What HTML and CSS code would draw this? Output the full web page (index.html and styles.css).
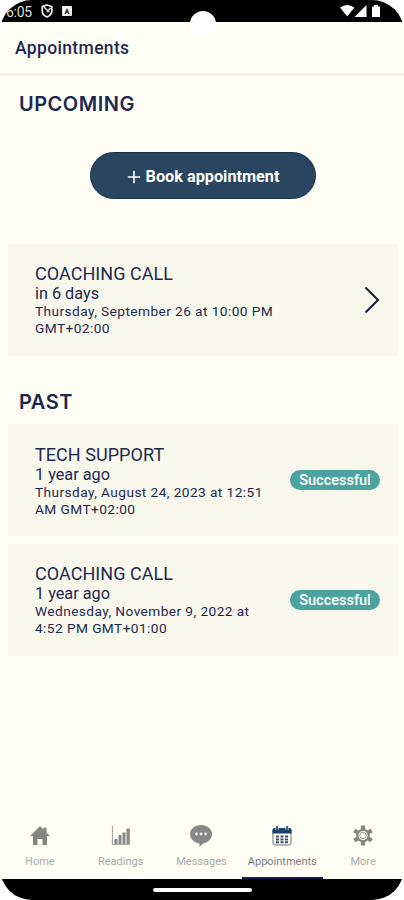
FILE: index.html
```html
<!DOCTYPE html>
<html lang="en">
<head>
<meta charset="utf-8">
<title>Appointments</title>
<link rel="stylesheet" href="styles.css">
</head>
<body>
<div class="phone">
  <div class="status">
    <span class="time">6:05</span>
    <svg class="shield" width="12" height="14" viewBox="0 0 12 14"><path d="M6 1 10.8 2.7V6.500C10.800 9.500 8.500 12 6 13 3.500 12 1.200 9.500 1.200 6.500V2.700Z" fill="none" stroke="#eee" stroke-width="1.700"/><path d="M3 3 8 8M6 8 9.500 4" stroke="#ddd" stroke-width="1.500"/></svg>
    <svg class="abox" width="10" height="10" viewBox="0 0 10 10"><rect width="10" height="10" rx="1" fill="#eee"/><path d="M5 2 7.500 8H6L5 6 4 8H2.500Z" fill="#222"/></svg>
    <svg class="signals" width="42" height="14" viewBox="0 0 42 14"><path d="M0 3.500Q7.200-1.500 14.400 3.500L7.200 12.500ZM14.500 13 26.500 1V13ZM32 2.500H34V1H38V2.500H40V13H32Z" fill="#fff"/></svg>
  </div>
  <div class="camera"></div>
  <header class="bar">Appointments</header>
  <main class="content">
    <h2>UPCOMING</h2>
    <button class="book"><svg width="14" height="14" viewBox="0 0 14 14"><path d="M7 .8V13.200M.8 7H13.200" stroke="#fff" stroke-width="1.600"/></svg><span>Book appointment</span></button>
    <article class="card">
      <div class="info"><h3>COACHING CALL</h3><p class="when">in 6 days</p><p class="date">Thursday, September 26 at 10:00 PM<br>GMT+02:00</p></div>
      <svg class="chevron" width="16" height="28" viewBox="0 0 16 28"><path d="M1.500 1.500 14 14 1.500 26.500" fill="none" stroke="#1c1c46" stroke-width="2"/></svg>
    </article>
    <h2 class="past">PAST</h2>
    <article class="card">
      <div class="info"><h3>TECH SUPPORT</h3><p class="when">1 year ago</p><p class="date">Thursday, August 24, 2023 at 12:51<br>AM GMT+02:00</p></div>
      <span class="badge">Successful</span>
    </article>
    <article class="card">
      <div class="info"><h3>COACHING CALL</h3><p class="when">1 year ago</p><p class="date">Wednesday, November 9, 2022 at<br>4:52 PM GMT+01:00</p></div>
      <span class="badge">Successful</span>
    </article>
  </main>
  <nav class="tabs">
    <a class="tab"><svg width="22" height="22" viewBox="0 0 22 22"><path d="M11 1 14.500 4.400V2.500H17.500V7.400L21 11H18V20H13.500V14H8.500V20H4V11H1Z" fill="#858585"/></svg><span>Home</span></a>
    <a class="tab"><svg width="22" height="22" viewBox="0 0 22 22"><path d="M2.500 1V19.500H20" fill="none" stroke="#aaa" stroke-width="1.200"/><path d="M4.500 14H7.500V19H4.500ZM8.500 10H11.500V19H8.500ZM12.500 7.500H15.500V19H12.500ZM16.500 3.500H19.800V19H16.500Z" fill="#888"/></svg><span>Readings</span></a>
    <a class="tab"><svg width="24" height="22" viewBox="0 0 24 22"><path d="M12 0C18 0 23 4 23 9 23 14 18.500 18 14 18.500L10.500 22V18.500C5.500 18 1 14 1 9 1 4 6 0 12 0Z" fill="#888"/><g fill="#eee"><circle cx="7.500" cy="9" r="1.400"/><circle cx="12" cy="9" r="1.400"/><circle cx="16.500" cy="9" r="1.400"/></g></svg><span>Messages</span></a>
    <a class="tab active"><svg width="22" height="22" viewBox="0 0 22 22"><rect x="2" y="3.500" width="18" height="16.500" rx="2" fill="#fefef5" stroke="#63758c"/><path d="M1.500 8.500V5Q1.500 3 3.500 3H18.500Q20.500 3 20.500 5V8.500Z" fill="#1d3f67"/><path d="M6 1V5M16 1V5" stroke="#fefef5" stroke-width="3"/><path d="M6 1V5M16 1V5" stroke="#1d3f67" stroke-width="1.600"/><path d="M5 11.500H17M5 14.500H17M5 17.300H17" stroke="#38516f" stroke-width="2" stroke-dasharray="3 1.500"/></svg><span>Appointments</span></a>
    <a class="tab"><svg width="22" height="22" viewBox="0 0 22 22"><g stroke="#858585" stroke-width="4.200"><path d="M11 .5V5M11 16V20.500M2.340 5.500 6.230 7.750M15.770 13.250 19.660 15.500M2.340 15.500 6.230 13.250M15.770 7.750 19.660 5.500"/></g><circle cx="11" cy="10.500" r="5.700" fill="#fefef5" stroke="#858585" stroke-width="2.200"/><circle cx="11" cy="10.500" r="3.300" fill="none" stroke="#999"/></svg><span>More</span></a>
  </nav>
  <footer class="system"><i></i></footer>
</div>
</body>
</html>
```
FILE: styles.css
```css
* { box-sizing: border-box; }
body { margin: 0; background: #fff; font-family: Roboto, sans-serif; color: #1d2850; }
.phone { position: relative; width: 404px; height: 900px; display: flex; flex-direction: column; overflow: hidden; background: #fefef5; border-radius: 32px; }
.status { height: 22px; flex: none; background: #000; display: flex; align-items: flex-start; padding-top: 5px; }
.time { width: 27px; margin-left: 6px; font-size: 14px; line-height: 14px; color: #ddd; letter-spacing: -.3px; }
.shield { margin-left: 8px; margin-top: -1px; }
.abox { margin: 1px 0 0 9px; }
.signals { margin-left: auto; margin-right: 22px; margin-top: -1px; }
.camera { position: absolute; left: 190px; top: 11px; width: 26px; height: 26px; border-radius: 50%; background: #fff; }
.bar { height: 54px; flex: none; padding: 15px 15px 0; border-bottom: 3px solid #f0f0ea; font-size: 17.500px; line-height: 23px; font-weight: 500; letter-spacing: .35px; }
.content { flex: 1; padding: 16px 6px 0 8px; display: flex; flex-direction: column; }
h2 { margin: 0 0 0 11px; font: 600 20px/25px Inter, Roboto, sans-serif; letter-spacing: .5px; }
.book { align-self: center; width: 226px; height: 47px; margin: 35px 0 44.500px; padding: 3px 0 0; border: 1px solid #183553; border-radius: 24px; background: #2a455f; color: #fff; display: flex; align-items: center; justify-content: center; gap: 5px; font: 700 16.250px/20px Roboto, sans-serif; }
.card { height: 112px; flex: none; background: #f8f8ed; display: flex; align-items: center; justify-content: space-between; padding: 0 18px 0 27px; margin-bottom: 7.500px; }
.past { margin-top: 27px; margin-bottom: 9px; }
.info { white-space: nowrap; padding-top: 1px; }
h3 { margin: 0; font-size: 18px; line-height: 22px; font-weight: 400; letter-spacing: .05px; }
p { margin: 0; }
.when { font-size: 16.250px; line-height: 18px; }
.date { font-size: 13.700px; line-height: 17px; letter-spacing: .42px; }
.badge { width: 90px; height: 20px; border-radius: 10px; background: #4ba3a0; color: #fff; font-size: 14.500px; line-height: 21px; font-weight: 500; text-align: center; }
.tabs { height: 60px; flex: none; display: grid; grid-template-columns: repeat(5, 1fr); }
.tab { display: flex; flex-direction: column; align-items: center; padding: 6px 1px 0 0; border-bottom: 2px solid transparent; font-size: 11px; color: #aaa; letter-spacing: 0; }
.tab span { margin-top: 8px; line-height: 13px; }
.active { border-color: #171752; color: #7b7f86; }
.system { height: 21px; flex: none; background: #000; display: flex; justify-content: center; padding-top: 9px; }
.system i { width: 99px; height: 4px; border-radius: 2px; background: #fff; }
```
